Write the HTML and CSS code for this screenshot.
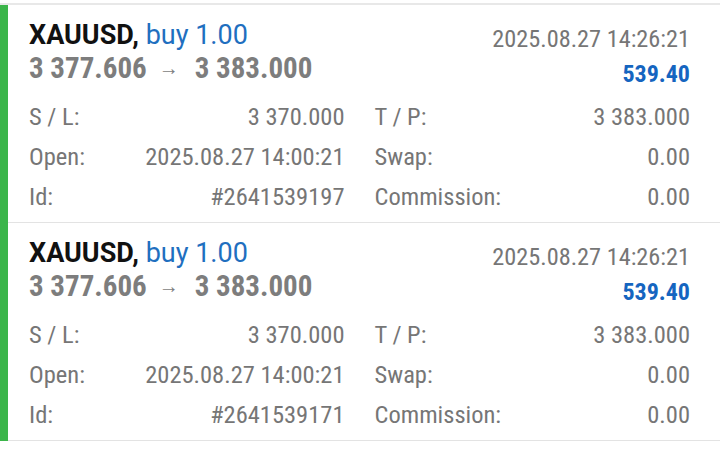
FILE: index.html
```html
<!DOCTYPE html>
<html lang="en">
<head>
    <meta charset="UTF-8">
    <meta name="viewport" content="width=device-width, initial-scale=1.0">
    <title>Trade</title>
    <link rel="stylesheet" href="styles.css">
</head>
<body>
    <div class="list">
        <div class="orders">
            <div class="order">
                <div class="head">
                    <div class="head-left">
                        <div class="title"><span class="symbol">XAUUSD,</span> <span class="type">buy 1.00</span></div>
                        <div class="prices">3 377.606<span class="arrow">→</span>3 383.000</div>
                    </div>
                    <div class="head-right">
                        <div class="time">2025.08.27 14:26:21</div>
                        <div class="profit">539.40</div>
                    </div>
                </div>
                <div class="details">
                    <div class="row"><span>S / L:</span><span>3 370.000</span></div>
                    <div class="row"><span>T / P:</span><span>3 383.000</span></div>
                    <div class="row"><span>Open:</span><span>2025.08.27 14:00:21</span></div>
                    <div class="row"><span>Swap:</span><span>0.00</span></div>
                    <div class="row"><span>Id:</span><span>#2641539197</span></div>
                    <div class="row"><span>Commission:</span><span>0.00</span></div>
                </div>
            </div>

            <div class="order">
                <div class="head">
                    <div class="head-left">
                        <div class="title"><span class="symbol">XAUUSD,</span> <span class="type">buy 1.00</span></div>
                        <div class="prices">3 377.606<span class="arrow">→</span>3 383.000</div>
                    </div>
                    <div class="head-right">
                        <div class="time">2025.08.27 14:26:21</div>
                        <div class="profit">539.40</div>
                    </div>
                </div>
                <div class="details">
                    <div class="row"><span>S / L:</span><span>3 370.000</span></div>
                    <div class="row"><span>T / P:</span><span>3 383.000</span></div>
                    <div class="row"><span>Open:</span><span>2025.08.27 14:00:21</span></div>
                    <div class="row"><span>Swap:</span><span>0.00</span></div>
                    <div class="row"><span>Id:</span><span>#2641539171</span></div>
                    <div class="row"><span>Commission:</span><span>0.00</span></div>
                </div>
            </div>
        </div>
    </div>
</body>
</html>
```

FILE: styles.css
```css
body {
    margin: 0;
    padding-top: 3px;
    background: #fff;
    font-family: "Roboto Condensed", Roboto, sans-serif;
    color: #767676;
}
.list {
    border-top: 2px solid #e8e8e8;
}
.orders {
    border-left: 8px solid #3bb54a;
}
.order {
    padding: 14px 30px 5px 21px;
    border-bottom: 1px solid #e3e3e3;
}
.head {
    display: flex;
    justify-content: space-between;
    align-items: flex-start;
}
.title {
    font-family: Roboto, sans-serif;
    font-size: 27px;
    line-height: 32px;
}
.symbol {
    font-weight: bold;
    color: #111;
}
.type {
    color: #1f6fbf;
}
.prices {
    font-size: 29px;
    line-height: 34px;
    font-weight: bold;
    color: #7d7d7d;
}
.arrow {
    display: inline-block;
    font-size: 20px;
    font-weight: 500;
    margin: 0 16px 0 12px;
    vertical-align: 3px;
}
.head-right {
    text-align: right;
}
.time {
    font-size: 24.3px;
    line-height: 39px;
}
.profit {
    font-size: 24px;
    line-height: 32px;
    font-weight: bold;
    color: #1565c0;
}
.details {
    margin-top: 7px;
    display: grid;
    grid-template-columns: 1fr 1fr;
    column-gap: 30px;
}
.row {
    display: flex;
    justify-content: space-between;
    font-size: 24.5px;
    line-height: 40px;
}
```
